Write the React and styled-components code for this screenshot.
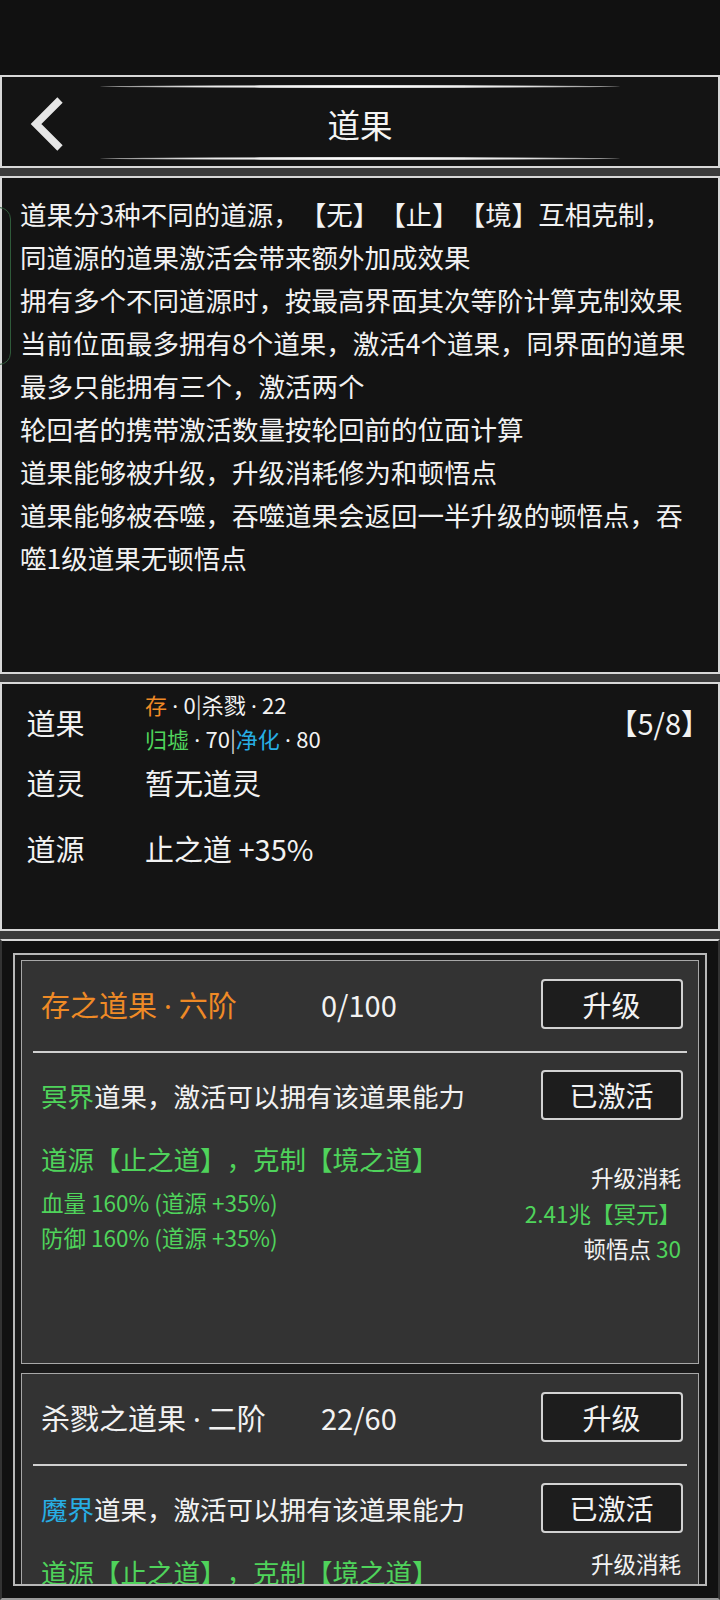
import React from 'react';
import styled, { createGlobalStyle } from 'styled-components';

const GREEN = '#4fd35b';
const ORANGE = '#ef8a26';
const CYAN = '#27aee4';
const WHITE = '#f2f2f2';

const GlobalStyle = createGlobalStyle`
  html, body {
    margin: 0;
    padding: 0;
    background: #3b3b3b;
  }
  body {
    font-family: "Noto Sans CJK SC", "Noto Sans", sans-serif;
    color: ${WHITE};
    text-spacing-trim: space-all;
  }
  * { box-sizing: border-box; }
`;

const Page = styled.div`
  width: 720px;
  height: 1600px;
  display: flex;
  flex-direction: column;
  gap: 8px;
  background: #3b3b3b;
  overflow: hidden;
`;

const StatusBar = styled.div`
  height: 75px;
  margin-bottom: -8px;
  background: #111111;
  flex-shrink: 0;
`;

const Panel = styled.section`
  position: relative;
  flex-shrink: 0;
  height: ${p => p.$h}px;
  border: 2px solid #d8d8d8;
  background: #141414;
`;

const Header = styled(Panel)`
  display: flex;
  flex-direction: column;
  padding: 8px 0 6px;
`;

const GlowLine = styled.div`
  height: 3px;
  margin: 0 98px;
  border-radius: 50%;
  background: radial-gradient(ellipse at center, #ffffff 0%, #e6e6e6 45%, rgba(200, 200, 200, 0.35) 80%, rgba(120, 120, 120, 0) 100%);
`;

const TitleRow = styled.div`
  flex: 1;
  display: grid;
  grid-template-columns: 1fr auto 1fr;
  align-items: center;
  padding-top: 3px;
`;

const BackButton = styled.div`
  display: flex;
  align-items: center;
  padding-left: 25px;
`;

const Title = styled.h1`
  margin: 0;
  font-size: 32.5px;
  font-weight: 400;
  color: #f4f4f4;
  line-height: 40px;
`;

const DescPanel = styled(Panel)`
  background: #131313;
  padding: 13.5px 10px 0 18px;
`;

const SideTab = styled.div`
  position: absolute;
  left: -24px;
  top: 29px;
  width: 33px;
  height: 158px;
  border: 1px solid #2f5a3a;
  border-radius: 12px;
`;

const DescLine = styled.div`
  font-size: 26.5px;
  line-height: 43px;
  white-space: nowrap;
`;

const StatsPanel = styled(Panel)`
  padding: 5px 8px 0 24.5px;
`;

const StatRow = styled.div`
  display: flex;
  align-items: center;
  height: ${p => p.$h}px;
`;

const StatLabel = styled.div`
  width: 118.5px;
  flex-shrink: 0;
  font-size: 29px;
`;

const StatValue = styled.div`
  font-size: 29px;
`;

const MiniLines = styled.div`
  font-size: 22px;
  line-height: 33px;
  white-space: nowrap;
`;

const Slots = styled.div`
  margin-left: auto;
  font-size: 29px;
`;

const Tint = styled.span`
  color: ${p => p.$c};
`;

const Dot = styled.span`
  font-family: "Noto Sans", sans-serif;
  margin: 0 0.24em;
`;

const Bar = styled.span`
  color: #d0d0d0;
`;

const ListPanel = styled.section`
  flex: 1;
  border-top: 2px solid #d8d8d8;
  border-bottom: 2px solid #9a9a9a;
  border-left: 2px solid #333333;
  border-right: 2px solid #333333;
  background: #111111;
  padding: 12px 11px 0 11px;
`;

const Frame = styled.div`
  height: 633px;
  border: 2px solid #b8b8b8;
  background: #1b1b1b;
  padding: 5px 6.5px 0 5.5px;
  overflow: hidden;
  display: flex;
  flex-direction: column;
  gap: 9px;
`;

const Card = styled.div`
  flex-shrink: 0;
  height: 404px;
  border: 1px solid #a8a8a8;
  background: #333333;
  padding: 18px 15px 0 19.5px;
`;

const TopRow = styled.div`
  display: flex;
  align-items: center;
  height: 50px;
`;

const CardTitle = styled.div`
  width: 280px;
  font-size: 29px;
  color: ${p => p.$c};
  white-space: nowrap;
`;

const Progress = styled.div`
  font-size: 29px;
`;

const ActionButton = styled.button`
  margin-left: auto;
  width: 142px;
  height: 50px;
  padding: 0;
  border: 2px solid #d2d2d2;
  border-radius: 4px;
  background: #1d1d1d;
  color: ${WHITE};
  font-family: inherit;
  font-size: ${p => p.$fs}px;
  display: flex;
  align-items: center;
  justify-content: center;
`;

const Divider = styled.div`
  height: 2px;
  background: #d0d0d0;
  margin: 22px -4.5px 0 -8px;
`;

const ActiveRow = styled(TopRow)`
  margin-top: 17px;
`;

const ActiveText = styled.div`
  font-size: 26.5px;
  white-space: nowrap;
`;

const Lower = styled.div`
  display: flex;
  align-items: flex-start;
  margin-top: 13px;
`;

const LeftBlock = styled.div`
  flex: 1;
  color: ${GREEN};
`;

const SourceLine = styled.div`
  font-size: 26.5px;
  line-height: 52px;
  white-space: nowrap;
`;

const EffectLine = styled.div`
  font-size: 22.5px;
  line-height: 35px;
  white-space: nowrap;
`;

const CostBlock = styled.div`
  margin-top: ${p => p.$shift}px;
  margin-right: 1.5px;
  text-align: right;
  font-size: 22.5px;
  line-height: 35.5px;
  white-space: nowrap;
`;

const descLines = [
  '道果分3种不同的道源，【无】【止】【境】互相克制，',
  '同道源的道果激活会带来额外加成效果',
  '拥有多个不同道源时，按最高界面其次等阶计算克制效果',
  '当前位面最多拥有8个道果，激活4个道果，同界面的道果',
  '最多只能拥有三个，激活两个',
  '轮回者的携带激活数量按轮回前的位面计算',
  '道果能够被升级，升级消耗修为和顿悟点',
  '道果能够被吞噬，吞噬道果会返回一半升级的顿悟点，吞',
  '噬1级道果无顿悟点',
];

const fruits = [
  {
    name: '存之道果',
    rank: '六阶',
    color: ORANGE,
    progress: '0/100',
    realm: '冥界',
    realmColor: GREEN,
    effects: ['血量 160% (道源 +35%)', '防御 160% (道源 +35%)'],
    cost: '2.41兆【冥元】',
    insight: 30,
    shift: 27,
  },
  {
    name: '杀戮之道果',
    rank: '二阶',
    color: WHITE,
    progress: '22/60',
    realm: '魔界',
    realmColor: CYAN,
    effects: ['攻击 60% (道源 +35%)', '暴击 60% (道源 +35%)'],
    cost: '1.20兆【魔元】',
    insight: 10,
    shift: 0,
  },
];

const BackIcon = () => (
  <svg width="36" height="54" viewBox="0 0 36 54">
    <polyline points="33,3 9,27 33,51" fill="none" stroke="#e6e6e6" strokeWidth="7.5" strokeLinejoin="miter" />
  </svg>
);

const FruitCard = ({ fruit }) => (
  <Card>
    <TopRow>
      <CardTitle $c={fruit.color}>
        {fruit.name}<Dot>·</Dot>{fruit.rank}
      </CardTitle>
      <Progress>{fruit.progress}</Progress>
      <ActionButton $fs={29}>升级</ActionButton>
    </TopRow>
    <Divider />
    <ActiveRow>
      <ActiveText>
        <Tint $c={fruit.realmColor}>{fruit.realm}</Tint>道果，激活可以拥有该道果能力
      </ActiveText>
      <ActionButton $fs={28}>已激活</ActionButton>
    </ActiveRow>
    <Lower>
      <LeftBlock>
        <SourceLine>道源【止之道】，克制【境之道】</SourceLine>
        {fruit.effects.map(e => (
          <EffectLine key={e}>{e}</EffectLine>
        ))}
      </LeftBlock>
      <CostBlock $shift={fruit.shift}>
        <div>升级消耗</div>
        <Tint $c={GREEN}>{fruit.cost}</Tint>
        <div>
          顿悟点 <Tint $c={GREEN}>{fruit.insight}</Tint>
        </div>
      </CostBlock>
    </Lower>
  </Card>
);

export default function App() {
  return (
    <>
      <GlobalStyle />
      <Page>
        <StatusBar />
        <Header $h={93}>
          <GlowLine />
          <TitleRow>
            <BackButton>
              <BackIcon />
            </BackButton>
            <Title>道果</Title>
            <div />
          </TitleRow>
          <GlowLine />
        </Header>

        <DescPanel $h={498}>
          <SideTab />
          {descLines.map(line => (
            <DescLine key={line}>{line}</DescLine>
          ))}
        </DescPanel>

        <StatsPanel $h={249}>
          <StatRow $h={66}>
            <StatLabel>道果</StatLabel>
            <MiniLines>
              <div>
                <Tint $c={ORANGE}>存</Tint><Dot>·</Dot>0<Bar>|</Bar>杀戮<Dot>·</Dot>22
              </div>
              <div>
                <Tint $c={GREEN}>归墟</Tint><Dot>·</Dot>70<Bar>|</Bar><Tint $c={CYAN}>净化</Tint><Dot>·</Dot>80
              </div>
            </MiniLines>
            <Slots>【5/8】</Slots>
          </StatRow>
          <StatRow $h={54}>
            <StatLabel>道灵</StatLabel>
            <StatValue>暂无道灵</StatValue>
          </StatRow>
          <StatRow $h={78}>
            <StatLabel>道源</StatLabel>
            <StatValue>止之道 +35%</StatValue>
          </StatRow>
        </StatsPanel>

        <ListPanel>
          <Frame>
            {fruits.map(f => (
              <FruitCard key={f.name} fruit={f} />
            ))}
          </Frame>
        </ListPanel>
      </Page>
    </>
  );
}
